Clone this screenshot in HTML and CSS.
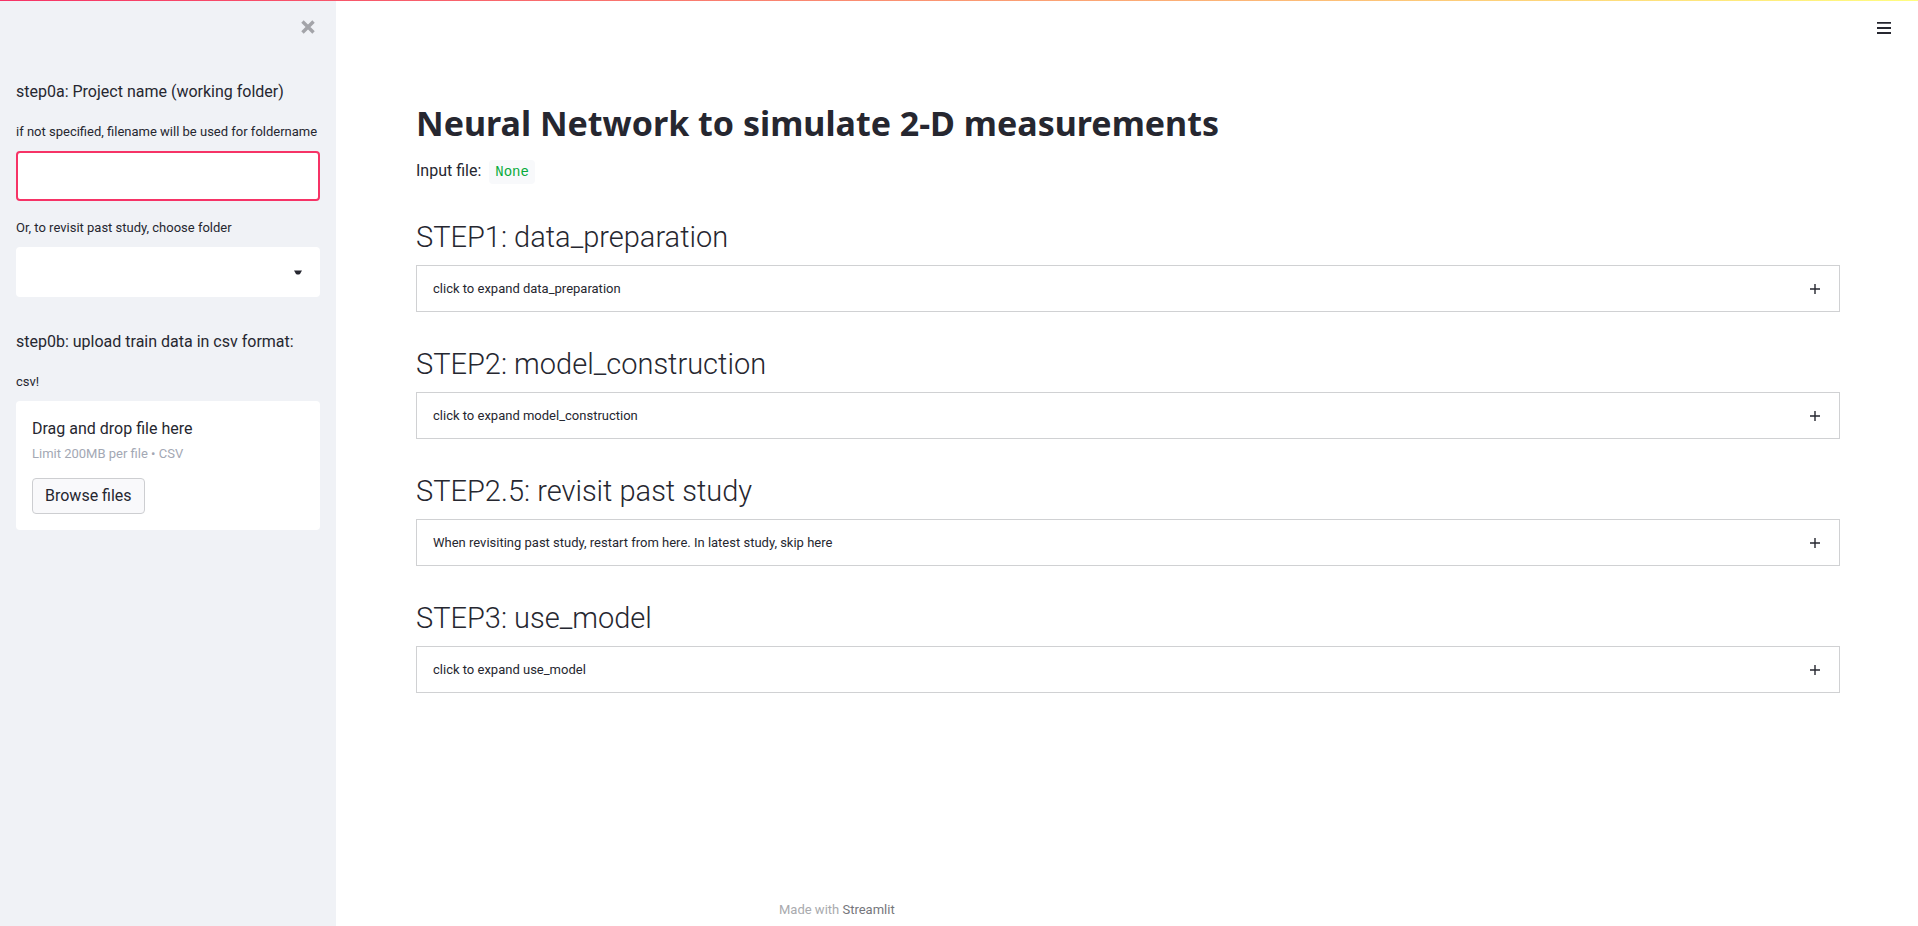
FILE: index.html
```html
<!DOCTYPE html>
<html lang="en">
<head>
<meta charset="utf-8">
<title>Neural Network to simulate 2-D measurements</title>
<link rel="stylesheet" href="styles.css">
</head>
<body>
<div class="decoration"></div>
<div class="app">
  <aside class="sidebar">
    <div class="sidebar-top">
      <button class="icon-button close" type="button" aria-label="Close sidebar">
        <svg width="14" height="14" viewBox="0 0 14 14"><path d="M2 2 12 12M12 2 2 12" fill="none" stroke="currentColor" stroke-width="4" stroke-linecap="square" stroke-linejoin="round" transform="translate(7 7) scale(.86) translate(-7 -7)"/></svg>
      </button>
    </div>
    <p class="lead">step0a: Project name (working folder)</p>
    <div class="field">
      <label for="project">if not specified, filename will be used for foldername</label>
      <input class="control control-active" id="project" type="text">
    </div>
    <div class="field">
      <label for="folder">Or, to revisit past study, choose folder</label>
      <div class="select-wrap">
        <select class="control" id="folder"><option></option></select>
        <svg class="caret" width="8" height="5" viewBox="0 0 8 5"><path d="M0 .5h8L6 4Q4 5 2 4Z" fill="currentColor"/></svg>
      </div>
    </div>
    <p class="lead">step0b: upload train data in csv format:</p>
    <div class="field">
      <label for="browse">csv!</label>
      <div class="dropzone">
        <span class="drop-title">Drag and drop file here</span>
        <span class="drop-hint">Limit 200MB per file • CSV</span>
        <button class="browse" id="browse" type="button">Browse files</button>
      </div>
    </div>
  </aside>
  <div class="page">
    <header class="toolbar">
      <button class="icon-button menu" type="button" aria-label="Menu">
        <svg width="14" height="14" viewBox="0 0 14 14"><path d="M0 1.8h14M0 7h14M0 12h14" fill="none" stroke="currentColor" stroke-width="1.8"/></svg>
      </button>
    </header>
    <main class="content">
      <h1>Neural Network to simulate 2-D measurements</h1>
      <p class="input-file">Input file: <code>None</code></p>
      <section class="step">
        <h2>STEP1: data_preparation</h2>
        <button class="expander" type="button">click to expand data_preparation
          <svg width="10" height="10" viewBox="0 0 10 10"><path d="M5 0v10M0 5h10" fill="none" stroke="currentColor" stroke-width="1.4"/></svg></button>
      </section>
      <section class="step">
        <h2>STEP2: model_construction</h2>
        <button class="expander" type="button">click to expand model_construction
          <svg width="10" height="10" viewBox="0 0 10 10"><path d="M5 0v10M0 5h10" fill="none" stroke="currentColor" stroke-width="1.4"/></svg></button>
      </section>
      <section class="step">
        <h2>STEP2.5: revisit past study</h2>
        <button class="expander" type="button">When revisiting past study, restart from here. In latest study, skip here
          <svg width="10" height="10" viewBox="0 0 10 10"><path d="M5 0v10M0 5h10" fill="none" stroke="currentColor" stroke-width="1.4"/></svg></button>
      </section>
      <section class="step">
        <h2>STEP3: use_model</h2>
        <button class="expander" type="button">click to expand use_model
          <svg width="10" height="10" viewBox="0 0 10 10"><path d="M5 0v10M0 5h10" fill="none" stroke="currentColor" stroke-width="1.4"/></svg></button>
      </section>
    </main>
    <footer class="footer">Made with <a href="#">Streamlit</a></footer>
  </div>
</div>
</body>
</html>
```
FILE: styles.css
```css
* { box-sizing: border-box; }
body {
  margin: 0;
  background: #fff;
  color: #262730;
  font-family: Roboto, "Noto Sans", sans-serif;
  font-size: 16px;
  line-height: 24px;
}
p, h1, h2 { margin: 0; }
button, input, select { font: inherit; color: inherit; }
button { cursor: pointer; }
svg { display: block; flex: none; }

.decoration {
  position: fixed;
  top: 0;
  left: 0;
  right: 0;
  height: 1px;
  z-index: 2;
  background: linear-gradient(90deg, #f63366, #fffd80);
}
.app { display: flex; min-height: 100vh; }

.sidebar {
  flex: none;
  width: 336px;
  padding: 0 16px 16px;
  background: #f0f2f6;
}
.sidebar-top {
  display: flex;
  justify-content: flex-end;
  height: 80px;
  padding: 20px 5px 0 0;
}
.icon-button {
  display: block;
  align-self: flex-start;
  padding: 0;
  border: 0;
  background: none;
}
.close { color: #a3a4a9; }
.lead { margin-bottom: 17px; }
.field { margin-bottom: 16px; }
.field + .lead { margin-top: 33px; }
.field label {
  display: block;
  margin-bottom: 8px;
  font-size: 13px;
  line-height: 22px;
}
.control {
  display: block;
  width: 100%;
  height: 50px;
  padding: 0 12px;
  border: 2px solid #fff;
  border-radius: 4px;
  background: #fff;
  outline: 0;
  appearance: none;
}
.control-active { border-color: #f63366; }
.select-wrap { position: relative; }
.caret {
  position: absolute;
  right: 18px;
  top: 23px;
  pointer-events: none;
}
.dropzone {
  display: flex;
  flex-direction: column;
  align-items: flex-start;
  padding: 16px;
  border-radius: 4px;
  background: #fff;
}
.drop-hint {
  margin: 2px 0 13px;
  color: #a3a8b4;
  font-size: 13px;
  line-height: 22px;
}
.browse {
  height: 36px;
  padding: 0 12px;
  border: 1px solid #cdced1;
  border-radius: 4px;
  background: #f9f9fb;
}

.page {
  display: flex;
  flex: 1;
  flex-direction: column;
  min-width: 0;
}
.toolbar {
  display: flex;
  justify-content: flex-end;
  height: 80px;
  padding: 21px 27px 0 0;
}
.content { flex: 1; padding: 17px 78px 80px 80px; }
h1 {
  margin-bottom: 10px;
  font-family: "Noto Sans", sans-serif;
  font-size: 34px;
  font-weight: 700;
  line-height: 52px;
}
.input-file { margin-bottom: 33px; }
code {
  margin-left: 4px;
  padding: 4px 6px;
  border-radius: 4px;
  background: #f8f9fb;
  color: #09ab3b;
  font-family: "Liberation Mono", monospace;
  font-size: 14px;
}
.step + .step { margin-top: 32px; }
h2 {
  margin-bottom: 8px;
  font-size: 29px;
  font-weight: 300;
  line-height: 40px;
}
.expander {
  display: flex;
  align-items: center;
  justify-content: space-between;
  width: 100%;
  height: 47px;
  padding: 0 19px 0 16px;
  border: 1px solid #d0d1d3;
  background: #fff;
  font-size: 13px;
  text-align: left;
}
.footer {
  width: 100%;
  max-width: 736px;
  margin: 0 auto;
  padding: 0 20px 4px;
  color: #a9aaae;
  font-size: 13px;
}
.footer a { color: #75767c; text-decoration: none; }
```
